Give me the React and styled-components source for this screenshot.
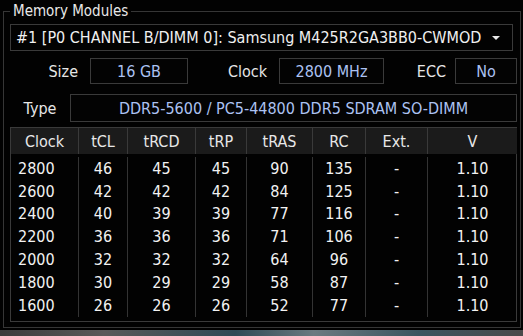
import styled, { createGlobalStyle } from 'styled-components'

const GlobalStyle = createGlobalStyle`
  html, body {
    margin: 0;
    padding: 0;
    background: #000;
  }
  body {
    font-family: "DejaVu Sans Condensed", "DejaVu Sans", sans-serif;
    font-stretch: condensed;
    color: #e6e6e6;
  }
`

const Screen = styled.main`
  width: 523px;
  height: 336px;
  overflow: hidden;
  display: flex;
  flex-direction: column;
  background: #020202;
`

const Group = styled.fieldset`
  margin: 3px 2px 0 3px;
  padding: 4px 3px 5px 6px;
  border: 1px solid #363636;
  display: flex;
  flex-direction: column;
  min-width: 0;
`

const Legend = styled.legend`
  padding: 0 3px;
  font-size: 15px;
  line-height: 17px;
  color: #e8e8e8;
`

const Select = styled.div`
  height: 27px;
  margin-right: 4px;
  border: 1px solid #3a3a3a;
  display: flex;
  align-items: center;
  padding: 0 12px 0 5px;
  font-size: 16px;
  color: #f0f0f0;
  box-sizing: border-box;
`

const SelectText = styled.span`
  flex: 1;
  white-space: nowrap;
`

const Arrow = styled.span`
  width: 0;
  height: 0;
  border-left: 4px solid transparent;
  border-right: 4px solid transparent;
  border-top: 4px solid #e8e8e8;
`

const InfoRow = styled.div`
  display: grid;
  grid-template-columns: ${({ cols }) => cols};
  align-items: center;
  height: ${({ h }) => h || 26}px;
  margin-top: ${({ top }) => top}px;
`

const Label = styled.span`
  font-size: 16px;
  color: #e6e6e6;
  text-align: ${({ align }) => align || 'right'};
  padding-right: ${({ pad }) => pad || 0}px;
`

const Value = styled.div`
  height: ${({ h }) => h || 26}px;
  border: 1px solid #3a3a3a;
  box-sizing: border-box;
  display: flex;
  align-items: center;
  justify-content: center;
  font-size: 16px;
  color: #acc2f2;
  background: #030303;
`

const Table = styled.div`
  margin-top: 5px;
  border: 1px solid #3a3a3a;
  display: grid;
  grid-template-columns: 67px 49px 68px 51px 66px 53px 62px 90px;
  grid-template-rows: 29px repeat(7, 22.8px);
  padding-bottom: 4px;
`

const Head = styled.div`
  height: 26px;
  display: flex;
  align-items: center;
  justify-content: center;
  background: #1b1b1b;
  font-size: 16px;
  color: #e8e8e8;
  border-left: ${({ first }) => (first ? 'none' : '1px solid #3a3a3a')};
`

const Cell = styled.div`
  display: flex;
  align-items: center;
  justify-content: ${({ first }) => (first ? 'flex-start' : 'center')};
  padding-left: ${({ first }) => (first ? 7 : 0)}px;
  font-size: 16px;
  color: #f2f2f2;
  border-left: ${({ first }) => (first ? 'none' : '1px solid #333')};
`

const Desktop = styled.div`
  flex: 1;
  margin-top: 2px;
  background: linear-gradient(90deg, #3c3c3c 0%, #595959 20%, #2e4a56 45%, #6a7a80 60%, #3b5560 80%, #4a4a4a 100%);
`

const headers = ['Clock', 'tCL', 'tRCD', 'tRP', 'tRAS', 'RC', 'Ext.', 'V']

const rows = [
  ['2800', '46', '45', '45', '90', '135', '-', '1.10'],
  ['2600', '42', '42', '42', '84', '125', '-', '1.10'],
  ['2400', '40', '39', '39', '77', '116', '-', '1.10'],
  ['2200', '36', '36', '36', '71', '106', '-', '1.10'],
  ['2000', '32', '32', '32', '64', '96', '-', '1.10'],
  ['1800', '30', '29', '29', '58', '87', '-', '1.10'],
  ['1600', '26', '26', '26', '52', '77', '-', '1.10'],
]

export default function App() {
  return (
    <Screen>
      <GlobalStyle />
      <Group>
        <Legend>Memory Modules</Legend>
        <Select>
          <SelectText>#1 [P0 CHANNEL B/DIMM 0]: Samsung M425R2GA3BB0-CWMOD</SelectText>
          <Arrow />
        </Select>
        <InfoRow cols="80px 98px 91px 105px 71px 62px" top={7}>
          <Label pad={12}>Size</Label>
          <Value>16 GB</Value>
          <Label pad={12}>Clock</Label>
          <Value>2800 MHz</Value>
          <Label pad={9}>ECC</Label>
          <Value>No</Value>
        </InfoRow>
        <InfoRow cols="60px 447px" top={10} h={28}>
          <Label align="center">Type</Label>
          <Value h={28}>DDR5-5600 / PC5-44800 DDR5 SDRAM SO-DIMM</Value>
        </InfoRow>
        {/* header row followed by 7 timing rows */}
        <Table>
          {headers.map((h, i) => (
            <Head key={h} first={i === 0}>{h}</Head>
          ))}
          {rows.map((r) =>
            r.map((v, i) => (
              <Cell key={r[0] + i} first={i === 0}>{v}</Cell>
            ))
          )}
        </Table>
      </Group>
      <Desktop />
    </Screen>
  )
}
